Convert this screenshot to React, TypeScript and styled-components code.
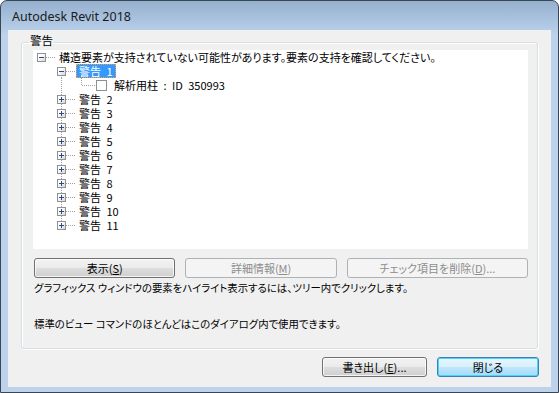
import React from 'react';
import styled, { createGlobalStyle, css } from 'styled-components';

const GlobalStyle = createGlobalStyle`
  html, body {
    margin: 0;
    padding: 0;
    background: #ffffff;
  }
  body {
    font-family: "Noto Sans CJK JP", "Noto Sans", sans-serif;
    font-feature-settings: "palt";
  }
`;

const Window = styled.div`
  width: 559px;
  height: 393px;
  box-sizing: border-box;
  border: 1px solid #3b4654;
  border-radius: 7px 7px 0 0;
  background: linear-gradient(to bottom, #95b0ce 0, #b0c8e3 24px, #bcd3eb 34px, #bcd3eb 100%);
  display: flex;
  flex-direction: column;
  overflow: hidden;
`;

const TitleBar = styled.div`
  height: 29px;
  box-sizing: border-box;
  padding: 2px 0 0 11px;
  display: flex;
  align-items: center;
  font-family: "Noto Sans", sans-serif;
  font-size: 12.5px;
  color: #1b1b1b;
`;

const Client = styled.div`
  flex: 1;
  margin: 0 7px 5px 7px;
  padding: 4px 13px 0 13px;
  background: #f0f0f0;
  display: flex;
  flex-direction: column;
`;

const Group = styled.fieldset`
  flex: 1;
  min-width: 0;
  margin: 0;
  padding: 0 9px 0 11px;
  border: 1px solid #d5dfe5;
  border-radius: 3px;
  box-shadow: inset 1px 1px 0 #ffffff, 1px 1px 0 #ffffff;
  display: flex;
  flex-direction: column;
`;

const Legend = styled.legend`
  margin-left: -4px;
  padding: 0 1px 4px 1px;
  font-size: 11.5px;
  line-height: 12px;
  color: #000;
`;

const Tree = styled.div`
  height: 199px;
  background: #ffffff;
  font-size: 11px;
  word-spacing: 3px;
  color: #000;
`;

const Row = styled.div`
  display: flex;
  align-items: center;
  height: 14px;
`;

type Vertical = 'none' | 'full' | 'top' | 'bottom';

const dotsDown = 'repeating-linear-gradient(to bottom, #a0a0a0 0 1px, transparent 1px 2px)';
const dotsRight = 'repeating-linear-gradient(to right, #a0a0a0 0 1px, transparent 1px 2px)';

const Gutter = styled.span<{ $v?: Vertical; $h?: boolean }>`
  position: relative;
  flex: none;
  width: 20px;
  height: 14px;

  &::before {
    content: '';
    position: absolute;
    left: 8px;
    width: 1px;
    background: ${dotsDown};
    display: ${p => (p.$v && p.$v !== 'none' ? 'block' : 'none')};
    top: ${p => (p.$v === 'bottom' ? '7px' : '0')};
    bottom: ${p => (p.$v === 'top' ? '7px' : '0')};
  }

  &::after {
    content: '';
    position: absolute;
    left: 9px;
    right: -2px;
    top: 7px;
    height: 1px;
    background: ${dotsRight};
    display: ${p => (p.$h ? 'block' : 'none')};
  }
`;

const Expander = styled.span<{ $open?: boolean }>`
  position: absolute;
  left: 4px;
  top: 3px;
  width: 9px;
  height: 9px;
  box-sizing: border-box;
  border: 1px solid #919191;
  background: linear-gradient(135deg, #ffffff 30%, #d6d6d6 100%);
  z-index: 1;

  &::before {
    content: '';
    position: absolute;
    left: 1px;
    top: 3px;
    width: 5px;
    height: 1px;
    background: #2e4a86;
  }

  &::after {
    content: '';
    position: absolute;
    left: 3px;
    top: 1px;
    width: 1px;
    height: 5px;
    background: #2e4a86;
    display: ${p => (p.$open ? 'none' : 'block')};
  }
`;

const Label = styled.span<{ $selected?: boolean; $gap?: number }>`
  margin-left: ${p => p.$gap ?? 3}px;
  padding: 0 3px;
  height: 14px;
  line-height: 14px;
  white-space: nowrap;
  ${p =>
    p.$selected &&
    css`
      background: #3399ff;
      color: #ffffff;
      outline: 1px dotted #f0a040;
      outline-offset: -1px;
    `}
`;

const Check = styled.span`
  margin-left: 3px;
  width: 11px;
  height: 11px;
  box-sizing: border-box;
  border: 1px solid #8e8f8f;
  background: #ffffff;
  flex: none;
`;

const Buttons = styled.div`
  display: flex;
  gap: 10px;
  margin-top: 9px;
  padding-left: 1px;
`;

const Button = styled.button<{ $w: number; $kind?: 'normal' | 'disabled' | 'default' }>`
  width: ${p => p.$w}px;
  height: 20px;
  box-sizing: border-box;
  margin: 0;
  padding: 0;
  font-family: inherit;
  font-size: 11px;
  font-feature-settings: "palt";
  color: #000;
  border: 1px solid #707070;
  border-radius: 3px;
  background: linear-gradient(to bottom, #f2f2f2 0%, #ebebeb 48%, #dddddd 52%, #cfcfcf 100%);
  box-shadow: inset 0 0 0 1px rgba(255, 255, 255, 0.75);

  ${p =>
    p.$kind === 'disabled' &&
    css`
      color: #8d8d8d;
      border-color: #adb2b5;
      background: #f4f4f4;
      box-shadow: none;
    `}

  ${p =>
    p.$kind === 'default' &&
    css`
      border-color: #3c7fb1;
      background: linear-gradient(to bottom, #eaf6fd 0%, #d9f0fc 48%, #bee6fd 52%, #a7d9f5 100%);
      box-shadow: inset 0 0 0 1px #48d6ff;
    `}

  u {
    text-decoration-thickness: 1px;
    text-underline-offset: 1px;
  }
`;

const Hint = styled.div<{ $top: number }>`
  margin-top: ${p => p.$top}px;
  padding-left: 1px;
  font-size: 10.4px;
  line-height: 14px;
  color: #000;
  white-space: nowrap;
`;

const Footer = styled.div`
  display: flex;
  justify-content: flex-end;
  gap: 10px;
  margin: 8px -1px 0 0;
  padding-bottom: 10px;
`;

const warnings = [2, 3, 4, 5, 6, 7, 8, 9, 10, 11];

const App = () => {
  return (
    <>
      <GlobalStyle />
      <Window>
        <TitleBar>Autodesk Revit 2018</TitleBar>
        <Client>
          <Group>
            <Legend>警告</Legend>
            <Tree>
              <Row>
                <Gutter $h>
                  <Expander $open />
                </Gutter>
                <Label>構造要素が支持されていない可能性があります。要素の支持を確認してください。</Label>
              </Row>
              <Row>
                <Gutter />
                <Gutter $v="bottom" $h>
                  <Expander $open />
                </Gutter>
                <Label $selected>警告 1</Label>
              </Row>
              <Row>
                <Gutter />
                <Gutter $v="full" />
                <Gutter $v="top" $h />
                <Check />
                <Label $gap={4}>解析用柱 : ID 350993</Label>
              </Row>
              {warnings.map((n, i) => (
                <Row key={n}>
                  <Gutter />
                  <Gutter $v={i === warnings.length - 1 ? 'top' : 'full'} $h>
                    <Expander />
                  </Gutter>
                  <Label>{`警告 ${n}`}</Label>
                </Row>
              ))}
            </Tree>
            <Buttons>
              <Button $w={142}>
                表示(<u>S</u>)
              </Button>
              <Button $w={152} $kind="disabled">
                詳細情報(<u>M</u>)
              </Button>
              <Button $w={182} $kind="disabled">
                チェック項目を削除(<u>D</u>)...
              </Button>
            </Buttons>
            <Hint $top={3}>グラフィックス ウィンドウの要素をハイライト表示するには、ツリー内でクリックします。</Hint>
            <Hint $top={22}>標準のビュー コマンドのほとんどはこのダイアログ内で使用できます。</Hint>
          </Group>
          <Footer>
            <Button $w={105}>
              書き出し(<u>E</u>)...
            </Button>
            <Button $w={102} $kind="default">
              閉じる
            </Button>
          </Footer>
        </Client>
      </Window>
    </>
  );
};

export default App;
